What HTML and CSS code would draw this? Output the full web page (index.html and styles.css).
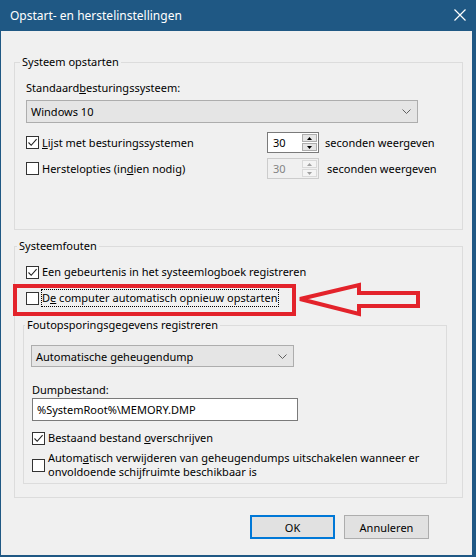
FILE: index.html
```html
<!DOCTYPE html>
<html lang="nl">
<head>
    <meta charset="UTF-8">
    <title>Opstart- en herstelinstellingen</title>
    <link rel="stylesheet" href="styles.css">
</head>
<body>
    <div class="window">
        <!-- Title bar -->
        <div class="titlebar">
            <span class="title">Opstart- en herstelinstellingen</span>
            <svg class="close" width="12" height="12" viewBox="0 0 12 12">
                <path d="M0.5 0.5 L11.5 11.5 M11.5 0.5 L0.5 11.5" stroke="#fff" stroke-width="1.2" fill="none"/>
            </svg>
        </div>

        <div class="content">
            <fieldset class="group startup">
                <legend>Systeem opstarten</legend>
                <div class="field-label">Standaard<u>b</u>esturingssysteem:</div>
                <div class="select select-os">
                    <span>Windows 10</span>
                    <svg class="chevron" width="9" height="5" viewBox="0 0 9 5"><path d="M0.5 0.5 L4.5 4.5 L8.5 0.5" stroke="#606060" fill="none"/></svg>
                </div>

                <div class="row timer-row">
                    <div class="check">
                        <span class="box">
                            <svg width="11" height="11" viewBox="0 0 11 11"><path d="M1.5 5.5 L4.2 8.3 L9.6 2.2" stroke="#222" stroke-width="1.1" fill="none"/></svg>
                        </span>
                        <span><u>L</u>ijst met besturingssystemen</span>
                    </div>
                    <div class="spin">
                        <span class="spin-value">30</span>
                        <span class="spin-btns">
                            <span class="spin-btn"><svg width="5" height="3" viewBox="0 0 5 3"><path d="M2.5 0 L5 3 L0 3 Z" fill="#000"/></svg></span>
                            <span class="spin-btn"><svg width="5" height="3" viewBox="0 0 5 3"><path d="M0 0 L5 0 L2.5 3 Z" fill="#000"/></svg></span>
                        </span>
                    </div>
                    <span class="unit">seconden weergeven</span>
                </div>

                <div class="row timer-row second">
                    <div class="check">
                        <span class="box"></span>
                        <span>Herstelopties (in<u>d</u>ien nodig)</span>
                    </div>
                    <div class="spin disabled">
                        <span class="spin-value">30</span>
                        <span class="spin-btns">
                            <span class="spin-btn"><svg width="5" height="3" viewBox="0 0 5 3"><path d="M2.5 0 L5 3 L0 3 Z" fill="#a0a0a0"/></svg></span>
                            <span class="spin-btn"><svg width="5" height="3" viewBox="0 0 5 3"><path d="M0 0 L5 0 L2.5 3 Z" fill="#a0a0a0"/></svg></span>
                        </span>
                    </div>
                    <span class="unit unit-off">seconden weergeven</span>
                </div>
            </fieldset>

            <fieldset class="group failures">
                <legend>Systeemfouten</legend>
                <div class="row check first-check">
                    <span class="box">
                        <svg width="11" height="11" viewBox="0 0 11 11"><path d="M1.5 5.5 L4.2 8.3 L9.6 2.2" stroke="#222" stroke-width="1.1" fill="none"/></svg>
                    </span>
                    <span>Een <u>g</u>ebeurtenis in het systeemlogboek registreren</span>
                </div>
                <div class="row check restart-check">
                    <span class="box"></span>
                    <span class="focused">D<u>e</u> computer automatisch opnieuw opstarten</span>
                </div>

                <fieldset class="group debug">
                    <legend>Foutopsporingsgegevens registreren</legend>
                    <div class="select select-dump">
                        <span>Automatische geheugendump</span>
                        <svg class="chevron" width="9" height="5" viewBox="0 0 9 5"><path d="M0.5 0.5 L4.5 4.5 L8.5 0.5" stroke="#606060" fill="none"/></svg>
                    </div>
                    <div class="field-label dump-label">Dumpbestand:</div>
                    <div class="textbox">%SystemRoot%\MEMORY.DMP</div>
                    <div class="row check overwrite-check">
                        <span class="box">
                            <svg width="11" height="11" viewBox="0 0 11 11"><path d="M1.5 5.5 L4.2 8.3 L9.6 2.2" stroke="#222" stroke-width="1.1" fill="none"/></svg>
                        </span>
                        <span>Bestaand bestand <u>o</u>verschrijven</span>
                    </div>
                    <div class="row check auto-check">
                        <span class="box"></span>
                        <span class="two-lines">Autom<u>a</u>tisch verwijderen van geheugendumps uitschakelen wanneer er<br>onvoldoende schijfruimte beschikbaar is</span>
                    </div>
                </fieldset>
            </fieldset>

            <div class="buttons">
                <button class="btn default">OK</button>
                <button class="btn">Annuleren</button>
            </div>
        </div>

        <!-- Red annotation drawn over the dialog -->
        <svg class="annotation" width="476" height="557" viewBox="0 0 476 557">
            <rect x="15" y="286" width="279" height="28" fill="none" stroke="#e3232b" stroke-width="4"/>
            <polygon points="300,299 359,285 359,293 418,293 418,306 359,306 359,314" fill="none" stroke="#e3232b" stroke-width="4" stroke-linejoin="miter"/>
        </svg>
    </div>
</body>
</html>
```

FILE: styles.css
```css
* {
    box-sizing: border-box;
}

body {
    margin: 0;
    padding: 0;
    font-family: "Noto Sans", "Open Sans", sans-serif;
    font-size: 11px;
    color: #000;
    background-color: #1f5884;
}

.window {
    position: relative;
    width: 476px;
    height: 557px;
    background-color: #1f5884;
    padding: 0 4px 2px 1px;
    display: flex;
    flex-direction: column;
}

/* Title bar */
.titlebar {
    height: 31px;
    display: flex;
    align-items: center;
    justify-content: space-between;
    padding: 0 6px 1px 9px;
    color: #fff;
}

.title {
    font-size: 12px;
}

.content {
    flex: 1;
    background-color: #f0f0f0;
    padding: 23px 9px 0 13px;
}

/* Group boxes */
.group {
    margin: 0;
    padding: 0 9px 50px 11px;
    border: 1px solid #dcdcdc;
    min-width: 0;
}

.group legend {
    padding: 0 2px;
    margin-left: -6px;
    line-height: 16px;
}

.field-label {
    margin-top: 10px;
    line-height: 16px;
}

.select {
    display: flex;
    align-items: center;
    justify-content: space-between;
    height: 23px;
    margin-top: 4px;
    padding: 0 6px 0 4px;
    background-color: #e5e5e5;
    border: 1px solid #adadad;
}

.select-os {
    width: 392px;
}

.row {
    display: flex;
    align-items: center;
    white-space: nowrap;
}

.timer-row {
    margin-top: 9px;
    height: 21px;
}

.timer-row.second {
    margin-top: 5px;
}

.check {
    display: flex;
    align-items: center;
    line-height: 16px;
}

.timer-row .check {
    width: 241px;
}

.box {
    width: 13px;
    height: 13px;
    flex-shrink: 0;
    border: 1px solid #333;
    background-color: #fff;
    margin-right: 3px;
    display: flex;
    align-items: center;
    justify-content: center;
}

/* Number spinner */
.spin {
    display: flex;
    width: 52px;
    height: 21px;
    border: 1px solid #7a7a7a;
    background-color: #fff;
}

.spin-value {
    flex: 1;
    padding-left: 5px;
    line-height: 19px;
}

.spin-btns {
    width: 17px;
    display: flex;
    flex-direction: column;
    padding: 1px;
    gap: 1px;
}

.spin-btn {
    flex: 1;
    display: flex;
    align-items: center;
    justify-content: center;
    background-color: #e5e5e5;
    border: 1px solid #adadad;
}

.spin.disabled {
    border-color: #cccccc;
    background-color: #f0f0f0;
    color: #838383;
}

.spin.disabled .spin-btn {
    background-color: #f4f4f4;
    border-color: #d9d9d9;
}

.unit {
    margin-left: 6px;
}

.unit-off {
    margin-left: 8px;
}

/* Systeemfouten */
.failures {
    margin-top: 8px;
    padding: 0 15px 13px 8px;
}

.failures > .row {
    padding-left: 3px;
    height: 16px;
}

.first-check {
    margin-top: 10px;
}

.restart-check {
    margin-top: 10px;
}

.focused {
    outline: 1px dotted #000;
    outline-offset: 0;
    padding-right: 1px;
}

.debug {
    margin-top: 11px;
    padding: 0 8px 4px 7px;
}

.select-dump {
    width: 263px;
    margin-top: 12px;
    height: 22px;
}

.dump-label {
    margin-top: 15px;
    padding-left: 1px;
}

.textbox {
    width: 266px;
    height: 23px;
    margin-left: 1px;
    padding-left: 4px;
    line-height: 21px;
    background-color: #fff;
    border: 1px solid #7a7a7a;
}

.overwrite-check {
    margin-top: 9px;
    padding-left: 1px;
}

.auto-check {
    margin-top: 5px;
    padding-left: 1px;
}

.two-lines {
    line-height: 14px;
}

/* Dialog buttons */
.buttons {
    display: flex;
    justify-content: flex-end;
    gap: 9px;
    margin-top: 17px;
    padding-right: 34px;
}

.btn {
    width: 85px;
    height: 24px;
    font-family: inherit;
    font-size: 11px;
    background-color: #e1e1e1;
    border: 1px solid #adadad;
    padding: 0;
}

.btn.default {
    border: 2px solid #0078d7;
}

.annotation {
    position: absolute;
    top: 0;
    left: 0;
    pointer-events: none;
}
```
